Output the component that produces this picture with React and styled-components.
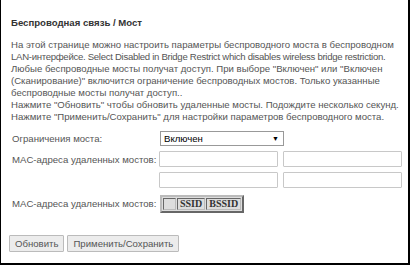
import React from "react"
import styled, { createGlobalStyle } from "styled-components"

const Global = createGlobalStyle`
  html, body { margin: 0; padding: 0; background: #fff; }
  body {
    font-family: "Liberation Sans", Arial, sans-serif;
    font-size: 9.6px;
    color: #555;
  }
`

const Frame = styled.div`
  box-sizing: border-box;
  width: 410px;
  height: 265px;
  overflow: hidden;
  border-left: 1px solid #000;
  border-right: 2px solid #000;
  border-bottom: 2px solid #000;
  padding: 16px 8px 0 9px;
`

const Title = styled.div`
  font-weight: bold;
  color: #333;
  line-height: 14px;
  margin-left: 1px;
`

const Intro = styled.div`
  margin: 9px 0 0 1px;
  line-height: 12px;
`

const Line = styled.div`
  white-space: nowrap;
  letter-spacing: ${p => (p.$tight ? "-0.3px" : "normal")};
`

const Form = styled.div`
  margin-top: 8px;
  display: grid;
  grid-template-columns: 149px auto;
  row-gap: 5px;
  align-items: center;
`

const Label = styled.div`
  margin-left: 2px;
  white-space: nowrap;
`

const Select = styled.div`
  box-sizing: border-box;
  width: 124px;
  height: 15px;
  margin-left: 1px;
  border: 1px solid #999;
  display: flex;
  align-items: center;
  justify-content: space-between;
  padding: 0 4px 0 3px;
  color: #000;
`

const Arrow = styled.span`
  font-size: 7px;
`

const Pair = styled.div`
  display: flex;
  gap: 5px;
`

const Input = styled.div`
  box-sizing: border-box;
  width: 119px;
  height: 16px;
  border: 1px solid #c8c8c8;
  border-radius: 1px;
`

const Table = styled.table`
  border: 2px outset #bbb;
  border-spacing: 1px;
  background: #ddd;
  margin: 2px 0 0 1px;
`

const Cell = styled.td`
  border: 1px inset #bbb;
  padding: 0 2px;
  height: 10px;
  width: ${p => (p.$empty ? "7px" : "auto")};
  font-family: "Liberation Serif", serif;
  font-weight: bold;
  font-size: 10px;
  color: #333;
  line-height: 10px;
`

const Buttons = styled.div`
  margin-top: 22px;
  display: flex;
  gap: 3px;
  margin-left: -1px;
`

const Button = styled.button`
  height: 17px;
  padding: 0 5px;
  border: 1px solid #bbb;
  background: #ececec;
  color: #555;
  font-family: inherit;
  font-size: 9.6px;
  border-radius: 1px;
`

const introLines = [
  ["На этой странице можно настроить параметры беспроводного моста в беспроводном"],
  ["LAN-интерфейсе. Select Disabled in Bridge Restrict which disables wireless bridge restriction.", true],
  ["Любые беспроводные мосты получат доступ. При выборе \"Включен\" или \"Включен"],
  ["(Сканирование)\" включится ограничение беспроводных мостов. Только указанные"],
  ["беспроводные мосты получат доступ.."],
  ["Нажмите \"Обновить\" чтобы обновить удаленные мосты. Подождите несколько секунд."],
  ["Нажмите \"Применить/Сохранить\" для настройки параметров беспроводного моста."],
]

export default function App() {
  return (
    <>
      <Global />
      <Frame>
        <Title>Беспроводная связь / Мост</Title>
        <Intro>
          {introLines.map(([text, tight]) => (
            <Line key={text} $tight={tight}>
              {text}
            </Line>
          ))}
        </Intro>
        <Form>
          <Label>Ограничения моста:</Label>
          <Select>
            <span>Включен</span>
            <Arrow>▼</Arrow>
          </Select>
          <Label>MAC-адреса удаленных мостов:</Label>
          <Pair>
            <Input />
            <Input />
          </Pair>
          <div />
          <Pair>
            <Input />
            <Input />
          </Pair>
          <Label>MAC-адреса удаленных мостов:</Label>
          <div>
            <Table>
              <tbody>
                <tr>
                  <Cell $empty />
                  <Cell>SSID</Cell>
                  <Cell>BSSID</Cell>
                </tr>
              </tbody>
            </Table>
          </div>
        </Form>
        <Buttons>
          <Button>Обновить</Button>
          <Button>Применить/Сохранить</Button>
        </Buttons>
      </Frame>
    </>
  )
}
